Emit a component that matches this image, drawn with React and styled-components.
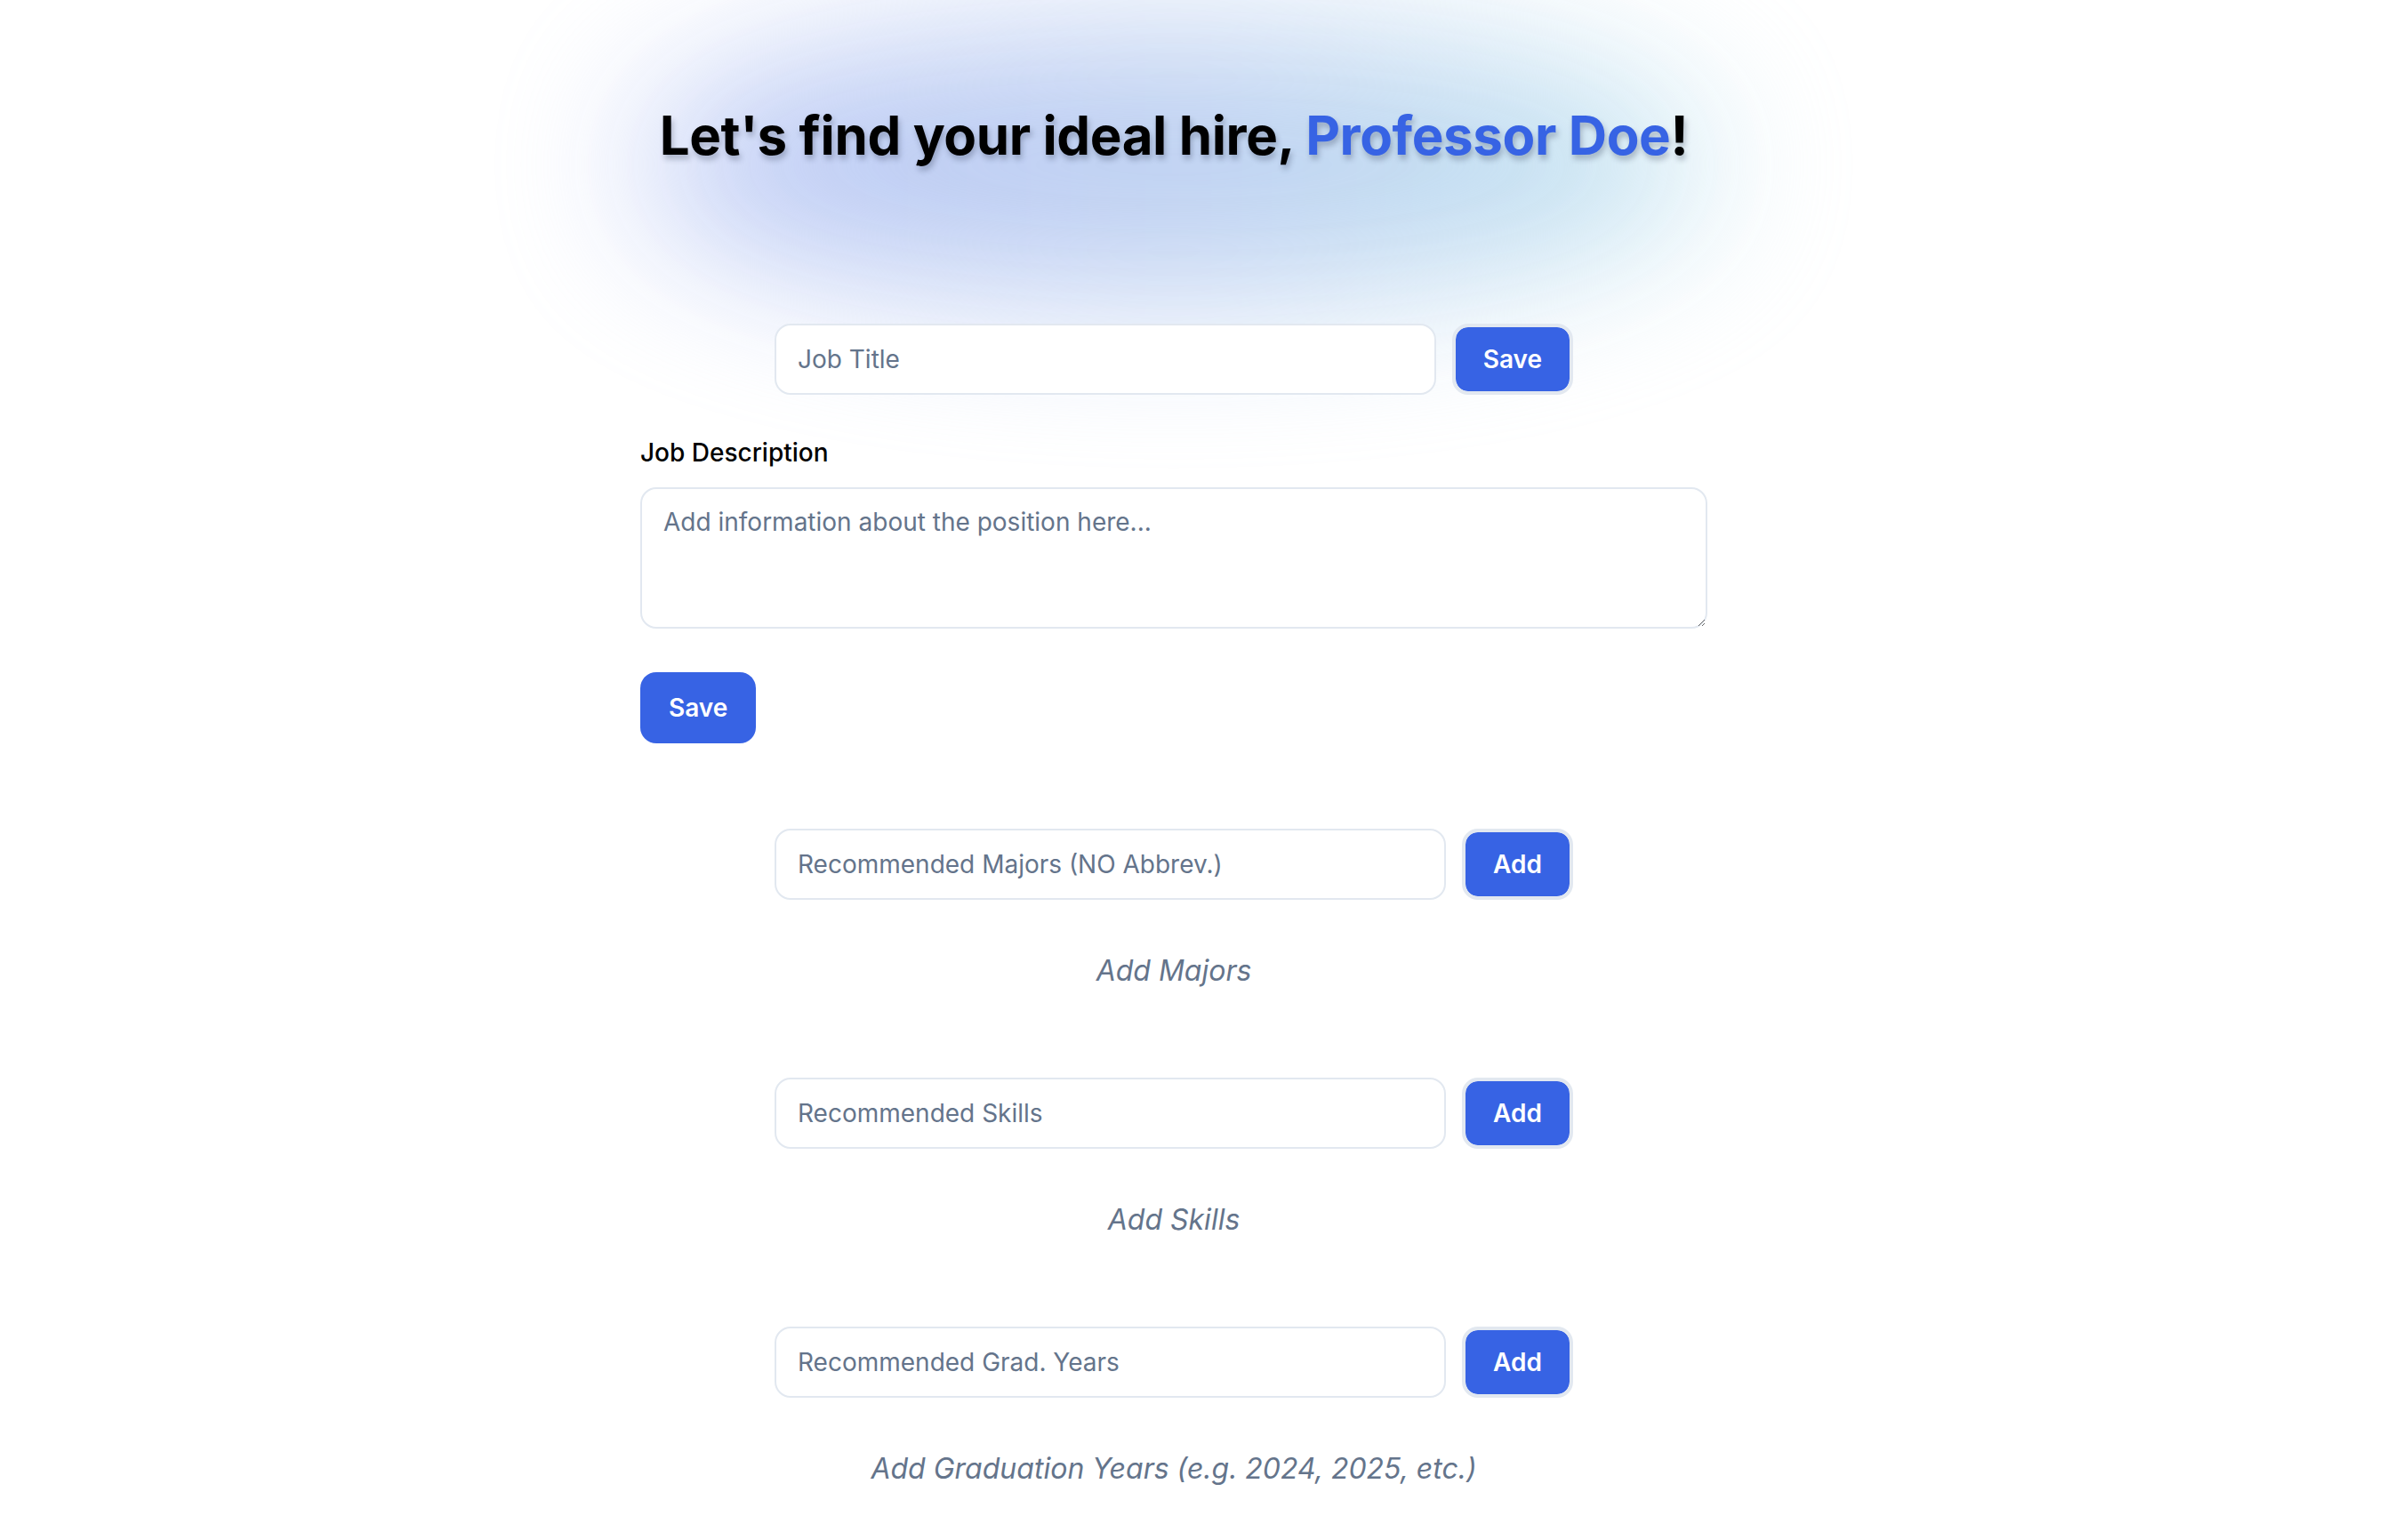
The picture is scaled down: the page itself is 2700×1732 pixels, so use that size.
import React from "react";
import styled, { createGlobalStyle } from "styled-components";

const GlobalStyle = createGlobalStyle`
  html, body { margin: 0; padding: 0; background: #ffffff; }
  body { font-family: Inter, "Noto Sans", sans-serif; color: #000; }
  * { box-sizing: border-box; }
`;

const Page = styled.div`
  position: relative;
  min-height: 1732px;
  overflow: hidden;
  display: flex;
  justify-content: center;
  padding-right: 60px;
`;

const Glow = styled.div`
  position: absolute;
  left: 720px;
  top: 30px;
  width: 1200px;
  height: 310px;
  border-radius: 50%;
  background: linear-gradient(90deg, #b3c2f4 0%, #bccff1 50%, #bde2ef 100%);
  filter: blur(85px);
  opacity: 0.95;
  pointer-events: none;
`;

const Column = styled.main`
  position: relative;
  width: 1200px;
  display: flex;
  flex-direction: column;
  padding-top: 116px;
`;

const Title = styled.h1`
  margin: 0;
  font-size: 60px;
  line-height: 72px;
  font-weight: 700;
  text-align: center;
  letter-spacing: -0.4px;
  color: #000;
  text-shadow: 2px 5px 6px rgba(30, 40, 70, 0.28);
`;

const Accent = styled.span`
  color: #3763e4;
`;

const Row = styled.div`
  display: flex;
  align-self: center;
  width: 898px;
  height: 80px;
  gap: 18px;
  margin-top: ${(p) => p.$mt || 0}px;
`;

const TextInput = styled.input`
  flex: 1;
  min-width: 0;
  height: 100%;
  border: 2px solid #e2e8f0;
  border-radius: 18px;
  background: #ffffff;
  padding: 0 24px;
  font-family: Inter, sans-serif;
  font-size: 28px;
  color: #0f172a;
  outline: none;
  &::placeholder { color: #64748b; }
`;

const Button = styled.button`
  flex: none;
  height: 80px;
  padding: 0 ${(p) => (p.$ring ? 31 : 32)}px;
  border: ${(p) => (p.$ring ? "4px solid #e2e8f0" : "none")};
  border-radius: 18px;
  background: #3763e4;
  background-clip: padding-box;
  color: #ffffff;
  font-family: Inter, sans-serif;
  font-size: 28px;
  font-weight: 600;
  cursor: pointer;
  align-self: ${(p) => (p.$start ? "flex-start" : "auto")};
  margin-top: ${(p) => p.$mt || 0}px;
`;

const Label = styled.label`
  margin-top: 44px;
  font-size: 28px;
  line-height: 42px;
  font-weight: 500;
  color: #000;
`;

const TextArea = styled.textarea`
  margin-top: 18px;
  width: 1200px;
  height: 159px;
  border: 2px solid #e2e8f0;
  border-radius: 18px;
  padding: 16px 24px;
  font-family: Inter, sans-serif;
  font-size: 28px;
  line-height: 42px;
  color: #0f172a;
  outline: none;
  &::placeholder { color: #64748b; }
`;

const Section = styled.section`
  display: flex;
  flex-direction: column;
  align-items: center;
  padding-top: 96px;
`;

const Hint = styled.p`
  margin: 56px 0 0;
  font-size: 32px;
  line-height: 48px;
  font-style: italic;
  color: #64748b;
  text-align: center;
`;

const lists = [
  { ph: "Recommended Majors (NO Abbrev.)", hint: "Add Majors" },
  { ph: "Recommended Skills", hint: "Add Skills" },
  { ph: "Recommended Grad. Years", hint: "Add Graduation Years (e.g. 2024, 2025, etc.)" },
];

export default function App() {
  return (
    <>
      <GlobalStyle />
      <Page>
        <Glow />
        <Column>
          <Title>
            Let's find your ideal hire, <Accent>Professor Doe</Accent>!
          </Title>
          <Row $mt={176}>
            <TextInput placeholder="Job Title" />
            <Button $ring>Save</Button>
          </Row>
          <Label>Job Description</Label>
          <TextArea placeholder="Add information about the position here..." />
          <Button $start $mt={49}>Save</Button>
          {lists.map((l) => (
            <Section key={l.hint}>
              <Row>
                <TextInput placeholder={l.ph} />
                <Button $ring>Add</Button>
              </Row>
              <Hint>{l.hint}</Hint>
            </Section>
          ))}
        </Column>
      </Page>
    </>
  );
}
